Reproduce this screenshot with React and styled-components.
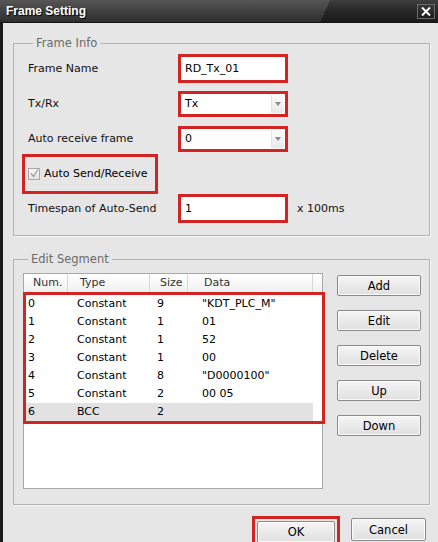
import React from 'react';
import styled, { createGlobalStyle } from 'styled-components';

const GlobalStyle = createGlobalStyle`
  html, body {
    margin: 0;
    padding: 0;
    background: #e6e6e6;
    overflow: hidden;
  }
  body {
    font-family: "DejaVu Sans", Tahoma, sans-serif;
    font-size: 11px;
    color: #111;
  }
`;

const Window = styled.div`
  width: 438px;
  height: 542px;
  display: flex;
  flex-direction: column;
`;

const TitleBar = styled.div`
  height: 23px;
  flex: none;
  box-sizing: border-box;
  display: flex;
  align-items: center;
  justify-content: space-between;
  padding: 0 3px 0 6px;
  border-bottom: 1px solid #141414;
  background:
    linear-gradient(to bottom, rgba(255, 255, 255, 0.13), rgba(255, 255, 255, 0.03) 45%, rgba(0, 0, 0, 0.22)),
    linear-gradient(114deg, #3d3d3d 73.7%, #222 73.7%);
`;

const Title = styled.span`
  font-family: "Liberation Sans", Arial, sans-serif;
  font-weight: bold;
  font-size: 12px;
  color: #fff;
  text-shadow: 1px 1px 1px #000;
`;

const CloseButton = styled.div`
  width: 18px;
  height: 15px;
  box-sizing: border-box;
  border: 1px solid #6a6a6a;
  background: linear-gradient(#3a3a3a, #1c1c1c);
  display: flex;
  align-items: center;
  justify-content: center;
`;

const Main = styled.div`
  flex: 1;
  border-left: 3px solid #1b1b1b;
  padding: 13px 8px 0 10px;
  display: flex;
  flex-direction: column;
`;

const Group = styled.fieldset`
  margin: ${p => p.$top || 0}px 0 0 0;
  min-width: 0;
  border: 1px solid #b3b3b3;
  box-shadow: 1px 1px 0 #f6f6f6;
  padding: ${p => p.$pad};
`;

const Legend = styled.legend`
  margin-left: 5px;
  padding: 0 3px;
  color: #6b6b6b;
  font-size: 11.5px;
  line-height: 14px;
`;

const Row = styled.div`
  height: 35px;
  display: flex;
  align-items: center;
`;

const Label = styled.span`
  width: 150px;
  flex: none;
`;

const Highlight = styled.div`
  box-sizing: border-box;
  border: 3px solid #d32424;
  background: ${p => p.$bg || 'transparent'};
`;

const FieldBox = styled(Highlight)`
  width: 110px;
  height: ${p => p.$h}px;
  flex: none;
`;

const Field = styled.div`
  height: 100%;
  background: #fff;
  display: flex;
  align-items: center;
  padding-left: 4px;
  color: #000;
`;

const ComboField = styled(Field)`
  justify-content: space-between;
  padding-right: 1px;
`;

const ComboButton = styled.div`
  width: 13px;
  height: calc(100% - 2px);
  box-sizing: border-box;
  background: linear-gradient(#fdfdfd, #e8e8e8);
  border-left: 1px solid #e4e4e4;
  display: flex;
  align-items: center;
  justify-content: center;
  &::after {
    content: '';
    border-top: 4px solid #8a8a8a;
    border-left: 3px solid transparent;
    border-right: 3px solid transparent;
  }
`;

const CheckHighlight = styled(Highlight)`
  height: 40px;
  margin-left: -6px;
  padding: 0 7px 0 3px;
  display: flex;
  align-items: center;
  gap: 4px;
  color: #000;
`;

const CheckBox = styled.div`
  width: 12px;
  height: 12px;
  box-sizing: border-box;
  border: 1px solid #a8a8a8;
  background: linear-gradient(#f6f6f6, #e4e4e4);
  display: flex;
  align-items: center;
  justify-content: center;
`;

const Unit = styled.span`
  margin-left: 9px;
`;

const SegmentBody = styled.div`
  display: flex;
  gap: 14px;
`;

const List = styled.div`
  width: 300px;
  height: 216px;
  box-sizing: border-box;
  border: 1px solid #a8a8a8;
  background: #fff;
`;

const cols = [
  { title: 'Num.', w: 44, hp: 9, rp: 2 },
  { title: 'Type', w: 82, hp: 12, rp: 9 },
  { title: 'Size', w: 38, hp: 10, rp: 7 },
  { title: 'Data', w: 125, hp: 16, rp: 14 },
];

const Header = styled.div`
  height: 18px;
  display: grid;
  grid-template-columns: ${cols.map(c => c.w + 'px').join(' ')} 1fr;
  background: linear-gradient(#ffffff, #f0f0f0);
  color: #333;
`;

const HeaderCell = styled.div`
  line-height: 18px;
  padding-left: ${p => p.$pad}px;
  border-right: ${p => (p.$last ? 'none' : '1px solid #d8d8d8')};
  white-space: nowrap;
`;

const RowsBox = styled(Highlight)`
  margin: 0 -3px 0 -1px;
`;

const ListRow = styled.div`
  height: 18px;
  display: grid;
  grid-template-columns: 42px ${cols.slice(1).map(c => c.w + 'px').join(' ')};
  color: #000;
`;

const Cell = styled.div`
  line-height: 18px;
  padding-left: ${p => p.$pad}px;
  background: ${p => (p.$selected ? '#e2e2e2' : 'transparent')};
  white-space: nowrap;
`;

const ButtonColumn = styled.div`
  display: flex;
  flex-direction: column;
  gap: 14px;
  padding-top: 2px;
`;

const Button = styled.button`
  width: ${p => p.$w || 84}px;
  height: ${p => p.$h || 21}px;
  margin-top: ${p => p.$mt || 0}px;
  padding: 0;
  box-sizing: border-box;
  border: 1px solid #8a8a8a;
  border-radius: 2px;
  background: linear-gradient(#f5f5f5, #e0e0e0);
  box-shadow: inset 0 0 0 1px #fbfbfb;
  font-family: "DejaVu Sans", Tahoma, sans-serif;
  font-size: 11.5px;
  color: #000;
`;

const Footer = styled.div`
  margin-top: 11px;
  padding-right: 4px;
  display: flex;
  justify-content: flex-end;
  align-items: flex-start;
  gap: 11px;
`;

const OkBox = styled(Highlight)`
  padding: 2px;
`;

const segments = [
  { num: '0', type: 'Constant', size: '9', data: '"KDT_PLC_M"' },
  { num: '1', type: 'Constant', size: '1', data: '01' },
  { num: '2', type: 'Constant', size: '1', data: '52' },
  { num: '3', type: 'Constant', size: '1', data: '00' },
  { num: '4', type: 'Constant', size: '8', data: '"D0000100"' },
  { num: '5', type: 'Constant', size: '2', data: '00 05' },
  { num: '6', type: 'BCC', size: '2', data: '', selected: true },
];

const App = () => {
  return (
    <Window>
      <GlobalStyle />
      <TitleBar>
        <Title>Frame Setting</Title>
        <CloseButton>
          <svg width="10" height="9" viewBox="0 0 10 9">
            <path d="M1 0.5 L9 8.5 M9 0.5 L1 8.5" stroke="#fff" strokeWidth="2" />
          </svg>
        </CloseButton>
      </TitleBar>
      <Main>
        <Group $pad="1px 0 9px 14px">
          <Legend>Frame Info</Legend>
          <Row>
            <Label>Frame Name</Label>
            <FieldBox $h={29}>
              <Field>RD_Tx_01</Field>
            </FieldBox>
          </Row>
          <Row>
            <Label>Tx/Rx</Label>
            <FieldBox $h={26}>
              <ComboField>
                Tx
                <ComboButton />
              </ComboField>
            </FieldBox>
          </Row>
          <Row>
            <Label>Auto receive frame</Label>
            <FieldBox $h={26}>
              <ComboField>
                0
                <ComboButton />
              </ComboField>
            </FieldBox>
          </Row>
          <Row>
            <CheckHighlight>
              <CheckBox>
                <svg width="9" height="9" viewBox="0 0 9 9">
                  <path d="M1 4.5 L3.5 7.5 L8 0.5" stroke="#9c9c9c" strokeWidth="1.3" fill="none" />
                </svg>
              </CheckBox>
              Auto Send/Receive
            </CheckHighlight>
          </Row>
          <Row>
            <Label>Timespan of Auto-Send</Label>
            <FieldBox $h={29}>
              <Field>1</Field>
            </FieldBox>
            <Unit>x 100ms</Unit>
          </Row>
        </Group>

        <Group $top={16} $pad="7px 8px 15px 9px">
          <Legend>Edit Segment</Legend>
          <SegmentBody>
            <List>
              <Header>
                {cols.map(c => (
                  <HeaderCell key={c.title} $pad={c.hp}>{c.title}</HeaderCell>
                ))}
                <HeaderCell $last />
              </Header>
              <RowsBox>
                {segments.map(s => (
                  <ListRow key={s.num}>
                    <Cell $pad={cols[0].rp} $selected={s.selected}>{s.num}</Cell>
                    <Cell $pad={cols[1].rp} $selected={s.selected}>{s.type}</Cell>
                    <Cell $pad={cols[2].rp} $selected={s.selected}>{s.size}</Cell>
                    <Cell $pad={cols[3].rp} $selected={s.selected}>{s.data}</Cell>
                  </ListRow>
                ))}
              </RowsBox>
            </List>
            <ButtonColumn>
              <Button>Add</Button>
              <Button>Edit</Button>
              <Button>Delete</Button>
              <Button>Up</Button>
              <Button>Down</Button>
            </ButtonColumn>
          </SegmentBody>
        </Group>

        <Footer>
          <OkBox>
            <Button $w={78} $h={22}>OK</Button>
          </OkBox>
          <Button $w={75} $h={23} $mt={2}>Cancel</Button>
        </Footer>
      </Main>
    </Window>
  );
};

export default App;
